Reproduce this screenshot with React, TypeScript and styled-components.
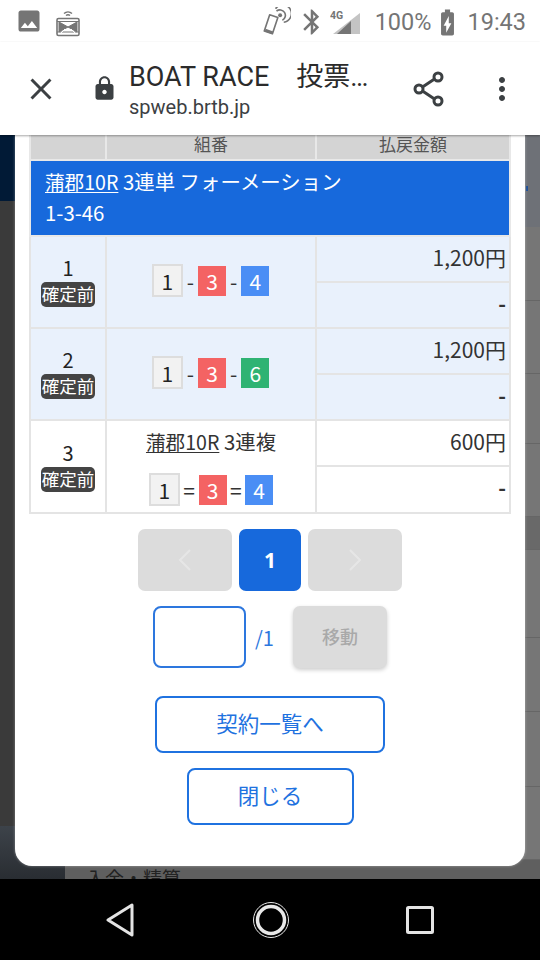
import React from 'react';
import styled, { createGlobalStyle } from 'styled-components';
import { MdImage, MdBluetooth, MdBatteryChargingFull, MdClose, MdLock, MdMoreVert } from 'react-icons/md';

const jp = `"Noto Sans CJK JP", "Noto Sans", sans-serif`;

const GlobalStyle = createGlobalStyle`
    html, body {
        margin: 0;
        padding: 0;
        background: #000;
    }
    * {
        box-sizing: border-box;
    }
`;

const Screen = styled.div`
    width: 540px;
    height: 960px;
    display: flex;
    flex-direction: column;
    overflow: hidden;
    font-family: ${jp};
    color: #222;
`;

const StatusBar = styled.div`
    height: 42px;
    flex: none;
    background: #fff;
    color: #757575;
    display: flex;
    align-items: center;
    padding: 2px 14px 0 18px;
    font-family: Roboto, sans-serif;
    font-size: 23.5px;
`;

const StatusLeft = styled.div`
    display: flex;
    align-items: center;
    gap: 15px;
    flex: 1;
`;

const StatusRight = styled.div`
    display: flex;
    align-items: center;
`;

const Percent = styled.span`
    margin: 0 1px 0 15px;
`;

const Clock = styled.span`
    margin-left: 4px;
`;

const Toolbar = styled.div`
    height: 93px;
    flex: none;
    background: #fff;
    display: flex;
    align-items: center;
    color: #3c4043;
    position: relative;
    z-index: 2;
    box-shadow: 0 1px 2px rgba(0, 0, 0, 0.35);
`;

const CloseButton = styled.div`
    width: 81px;
    display: flex;
    justify-content: center;
    padding-top: 1px;
`;

const LockSlot = styled.div`
    width: 48px;
    display: flex;
    padding: 0 0 0 10px;
`;

const TitleBlock = styled.div`
    flex: 1;
    padding-top: 3px;
`;

const PageTitle = styled.div`
    font-family: Roboto, "Noto Sans CJK JP", sans-serif;
    font-size: 27px;
    line-height: 34px;
    color: #2b2b2b;
`;

const PageUrl = styled.div`
    font-family: Roboto, sans-serif;
    font-size: 20px;
    line-height: 26px;
    color: #3c4043;
`;

const ToolIcons = styled.div`
    display: flex;
    align-items: center;
    gap: 39px;
    padding-right: 20px;
`;

const Viewport = styled.div`
    flex: 1;
    position: relative;
    overflow: hidden;
    background: #757575;
`;

const Backdrop = styled.div`
    height: 100%;
    display: flex;
`;

const Sidebar = styled.div`
    width: 65px;
    flex: none;
    display: flex;
    flex-direction: column;
`;

const SidebarTop = styled.div`
    height: 66px;
    background: #011a36;
`;

const SidebarMiddle = styled.div`
    height: 625px;
    background: #3a3a3a;
`;

const SidebarBottom = styled.div`
    flex: 1;
    background: linear-gradient(#3d434a, #292d32);
`;

const Rows = styled.div`
    flex: 1;
    display: flex;
    flex-direction: column;
`;

const RowHeader = styled.div`
    height: 92px;
    flex: none;
    background: #6e7177;
    position: relative;

    &::after {
        content: '';
        position: absolute;
        left: 461px;
        top: 51px;
        width: 2px;
        height: 5px;
        background: #1f4f96;
    }
`;

const BackRow = styled.div<{ $height: number; $dark?: boolean }>`
    height: ${p => p.$height}px;
    flex: none;
    background: ${p => (p.$dark ? '#696969' : '#767676')};
    border-bottom: 1px solid #666;
`;

const BackLabel = styled.div`
    flex: 1;
    padding: 6px 0 0 21px;
    font-size: 19px;
    line-height: 24px;
    color: #222;
    background: #5f5f5f;
`;

const Modal = styled.div`
    position: absolute;
    top: 0;
    left: 15px;
    width: 510px;
    height: 731px;
    background: #fff;
    border-radius: 0 0 17px 17px;
    overflow: hidden;
    box-shadow: 0 0 3px rgba(255, 255, 255, 0.4);
    display: flex;
    flex-direction: column;
    align-items: center;
`;

const Table = styled.table`
    width: 482px;
    margin: -16px 0 0 0;
    flex: none;
    table-layout: fixed;
    border-collapse: collapse;
    font-size: 21px;
    line-height: 28px;
`;

const HeadCell = styled.th`
    height: 41px;
    padding: 11px 0 1px;
    background: #d4d4d4;
    border: 2px solid #e8e8e8;
    border-top: none;
    font-size: 17px;
    font-weight: 400;
    line-height: 24px;
    color: #555;
`;

const NoLabel = styled.span`
    display: block;
    margin-top: -28px;
    color: #555;
`;

const BlueCell = styled.td`
    height: 75px;
    background: #1769dc;
    color: #fff;
    padding: 5px 14px 8px;
    border: 2px solid #e8e8e8;
    line-height: 30px;
    font-size: 20.4px;
`;

const Race = styled.u`
    font-size: 19.6px;
    text-underline-offset: 2px;
`;

const Cell = styled.td<{ $tinted?: boolean }>`
    background: ${p => (p.$tinted ? '#e9f1fc' : '#fff')};
    border: 2px solid #e4e4e4;
    text-align: center;
    padding: 0;
`;

const AmountCell = styled(Cell)<{ $height: number }>`
    height: ${p => p.$height}px;
    text-align: right;
    padding: 0 3px 5px 0;
    color: #333;
`;

const Dash = styled.span`
    font-weight: 700;
`;

const RowNo = styled.div`
    font-size: 20px;
    line-height: 28px;
`;

const Badge = styled.span`
    display: inline-block;
    background: #444;
    color: #fff;
    font-size: 17.5px;
    line-height: 23px;
    height: 25px;
    padding: 0 1px;
    border-radius: 5px;
    vertical-align: top;
`;

const Combo = styled.div<{ $wide?: boolean }>`
    display: flex;
    justify-content: center;
    align-items: center;
    gap: ${p => (p.$wide ? 3.5 : 4)}px;
    color: #333;
    padding-bottom: ${p => (p.$wide ? 0 : 3)}px;
    padding-right: ${p => (p.$wide ? 0 : 1)}px;
`;

const chipColors: Record<number, string> = {
    1: '#f2f2f2',
    3: '#f46363',
    4: '#4a8ef5',
    6: '#2fb373',
};

const Chip = styled.span<{ $n: number }>`
    width: ${p => (p.$n === 1 ? 31 : 28)}px;
    height: ${p => (p.$n === 1 ? 33 : 30)}px;
    display: flex;
    align-items: center;
    justify-content: center;
    font-size: 21px;
    background: ${p => chipColors[p.$n]};
    color: ${p => (p.$n === 1 ? '#222' : '#fff')};
    border: ${p => (p.$n === 1 ? '2px solid #ddd' : 'none')};
`;

const ComboTitle = styled.div`
    font-size: 20.4px;
    line-height: 28px;
    margin-bottom: 17px;
    color: #333;
`;

const Pager = styled.div`
    display: flex;
    gap: 7px;
    margin-top: 15px;
`;

const PageButton = styled.div<{ $active?: boolean; $width: number }>`
    width: ${p => p.$width}px;
    height: 62px;
    border-radius: 7px;
    display: flex;
    align-items: center;
    justify-content: center;
    font-size: 21px;
    font-weight: 700;
    font-family: "Noto Sans", sans-serif;
    background: ${p => (p.$active ? '#1769dc' : '#dcdcdc')};
    color: #fff;
`;

const JumpRow = styled.div`
    display: flex;
    align-items: center;
    margin-top: 15px;
`;

const PageInput = styled.input`
    width: 93px;
    height: 62px;
    border: 2px solid #2d77de;
    border-radius: 8px;
    background: #fff;
    outline: none;
`;

const PageTotal = styled.span`
    width: 47px;
    padding-left: 9px;
    font-size: 20px;
    color: #2d77de;
`;

const MoveButton = styled.div`
    width: 94px;
    height: 62px;
    padding-bottom: 2px;
    border-radius: 7px;
    background: #dcdcdc;
    color: #a9a9a9;
    font-size: 18px;
    font-weight: 500;
    display: flex;
    align-items: center;
    justify-content: center;
    box-shadow: 0 2px 4px rgba(0, 0, 0, 0.2);
`;

const OutlineButton = styled.div<{ $width: number; $top: number }>`
    width: ${p => p.$width}px;
    height: 57px;
    margin-top: ${p => p.$top}px;
    padding-bottom: 5px;
    border: 2px solid #1f72e0;
    border-radius: 8px;
    display: flex;
    align-items: center;
    justify-content: center;
    color: #1f72e0;
    font-size: 21.5px;
    background: #fff;
`;

const NavBar = styled.div`
    height: 81px;
    flex: none;
    background: #000;
    display: flex;
    align-items: center;
    justify-content: space-between;
    padding: 0 106px 0 105px;
`;

function PhotoCastIcon() {
    return (
        <svg width="24" height="30" viewBox="0 0 24 30" fill="none" stroke="#757575">
            <path d="M8 6.5a6 6 0 0 1 8 0M10 8.5a3.2 3.2 0 0 1 4 0" strokeWidth="1.4" />
            <rect x="1" y="11.5" width="22" height="17" rx="1.5" strokeWidth="1.6" />
            <path d="M1 14.5h22M1 25h22M3 15l9 5-9 5zM21 15l-9 5 9 5z" fill="#757575" strokeWidth="1" />
            <path d="M4 27l5-5M20 27l-5-5" strokeWidth="1" stroke="#fff" />
        </svg>
    );
}

function NfcPhoneIcon() {
    return (
        <svg width="29" height="30" viewBox="0 0 32 33" fill="none" stroke="#757575" strokeWidth="1.8">
            <path d="M8.5 8.5l9 3-6 18-9-3z" strokeLinejoin="round" />
            <path d="M3.5 25.5l8.5 3" strokeWidth="3" />
            <circle cx="20" cy="9" r="2.2" fill="#757575" stroke="none" />
            <path d="M16 4.5a6 6 0 1 1 6.5 10M15 1.8a9.6 9.6 0 1 1 9 15" />
        </svg>
    );
}

function SignalIcon() {
    return (
        <svg width="30" height="24" viewBox="0 0 30 24">
            <polygon points="30,3 30,24 3,24" fill="#c4c4c4" />
            <polygon points="21,11 21,24 7,24" fill="#757575" />
            <text x="0" y="9" fontSize="10.5" fontWeight="700" fontFamily="Roboto, sans-serif" fill="#757575">4G</text>
        </svg>
    );
}

function ShareIcon() {
    return (
        <svg width="32" height="36" viewBox="0 0 32 36" fill="none" stroke="#3c4043" strokeWidth="3">
            <circle cx="25" cy="6" r="4" />
            <circle cx="6" cy="18" r="4" />
            <circle cx="25" cy="30" r="4" />
            <path d="M9.5 16l12-8M9.5 20l12 8" />
        </svg>
    );
}

function PagerArrow({ left }: { left?: boolean }) {
    return (
        <svg width="14" height="22" viewBox="0 0 14 22" fill="none" stroke="#e6e6e6" strokeWidth="2">
            <path d={left ? 'M12 1L2 11l10 10' : 'M2 1l10 10L2 21'} />
        </svg>
    );
}

function BackIcon() {
    return (
        <svg width="30" height="34" viewBox="0 0 30 34" fill="none" stroke="#e4e4e4" strokeWidth="3" strokeLinejoin="round">
            <path d="M27 2v30L3 17z" />
        </svg>
    );
}

function HomeIcon() {
    return (
        <svg width="38" height="38" viewBox="0 0 38 38" fill="none" stroke="#e8e8e8">
            <circle cx="19" cy="19" r="17.5" strokeWidth="1" />
            <circle cx="19" cy="19" r="13.5" strokeWidth="3.5" />
        </svg>
    );
}

function RecentsIcon() {
    return (
        <svg width="28" height="28" viewBox="0 0 28 28" fill="none" stroke="#e4e4e4" strokeWidth="3" strokeLinejoin="round">
            <rect x="1.5" y="1.5" width="25" height="25" rx="1" />
        </svg>
    );
}

function ComboChips({ numbers, sep, wide }: { numbers: number[], sep: string, wide?: boolean }) {
    return (
        <Combo $wide={wide}>
            {numbers.map((n, i) => (
                <React.Fragment key={i}>
                    {i > 0 && <span>{sep}</span>}
                    <Chip $n={n}>{n}</Chip>
                </React.Fragment>
            ))}
        </Combo>
    );
}

function BetRow({ no, amount, tinted, last, children }: { no: number, amount: string, tinted?: boolean, last?: boolean, children: React.ReactNode }) {
    return (
        <>
            <tr>
                <Cell $tinted={tinted} rowSpan={2}>
                    <RowNo>{no}</RowNo>
                    <Badge>確定前</Badge>
                </Cell>
                <Cell $tinted={tinted} rowSpan={2}>{children}</Cell>
                <AmountCell $tinted={tinted} $height={46}>{amount}</AmountCell>
            </tr>
            <tr>
                <AmountCell $tinted={tinted} $height={last ? 47 : 46}><Dash>-</Dash></AmountCell>
            </tr>
        </>
    );
}

export default function App() {
    return (
        <Screen>
            <GlobalStyle />
            <StatusBar>
                <StatusLeft>
                    <MdImage size={28} style={{ margin: '-2px -2px 0 -3px' }} />
                    <PhotoCastIcon />
                </StatusLeft>
                <StatusRight>
                    <NfcPhoneIcon />
                    <MdBluetooth size={30} style={{ margin: '0 3px 0 6px' }} />
                    <SignalIcon />
                    <Percent>100%</Percent>
                    <MdBatteryChargingFull size={31} />
                    <Clock>19:43</Clock>
                </StatusRight>
            </StatusBar>
            <Toolbar>
                <CloseButton><MdClose size={36} /></CloseButton>
                <LockSlot><MdLock size={27} /></LockSlot>
                <TitleBlock>
                    <PageTitle>BOAT RACE　投票…</PageTitle>
                    <PageUrl>spweb.brtb.jp</PageUrl>
                </TitleBlock>
                <ToolIcons>
                    <ShareIcon />
                    <MdMoreVert size={36} />
                </ToolIcons>
            </Toolbar>
            <Viewport>
                <Backdrop>
                    <Sidebar>
                        <SidebarTop />
                        <SidebarMiddle />
                        <SidebarBottom />
                    </Sidebar>
                    <Rows>
                        <RowHeader />
                        <BackRow $height={74} />
                        <BackRow $height={73} />
                        <BackRow $height={70} />
                        <BackRow $height={73} />
                        <BackRow $height={33} $dark />
                        <BackRow $height={88} />
                        <BackRow $height={74} />
                        <BackRow $height={75} />
                        <BackRow $height={73} />
                        <BackLabel>入金・精算</BackLabel>
                    </Rows>
                </Backdrop>
                <Modal>
                    <Table>
                        <colgroup>
                            <col style={{ width: 76 }} />
                            <col style={{ width: 210 }} />
                            <col />
                        </colgroup>
                        <thead>
                            <tr>
                                <HeadCell><NoLabel>No</NoLabel></HeadCell>
                                <HeadCell>組番</HeadCell>
                                <HeadCell>払戻金額</HeadCell>
                            </tr>
                        </thead>
                        <tbody>
                            <tr>
                                <BlueCell colSpan={3}>
                                    <Race>蒲郡10R</Race> 3連単 フォーメーション<br />1-3-46
                                </BlueCell>
                            </tr>
                            <BetRow no={1} amount="1,200円" tinted>
                                <ComboChips numbers={[1, 3, 4]} sep="-" />
                            </BetRow>
                            <BetRow no={2} amount="1,200円" tinted>
                                <ComboChips numbers={[1, 3, 6]} sep="-" />
                            </BetRow>
                            <BetRow no={3} amount="600円" last>
                                <ComboTitle><Race>蒲郡10R</Race> 3連複</ComboTitle>
                                <ComboChips numbers={[1, 3, 4]} sep="=" wide />
                            </BetRow>
                        </tbody>
                    </Table>
                    <Pager>
                        <PageButton $width={94}><PagerArrow left /></PageButton>
                        <PageButton $width={62} $active>1</PageButton>
                        <PageButton $width={94}><PagerArrow /></PageButton>
                    </Pager>
                    <JumpRow>
                        <PageInput />
                        <PageTotal>/1</PageTotal>
                        <MoveButton>移動</MoveButton>
                    </JumpRow>
                    <OutlineButton $width={230} $top={28}>契約一覧へ</OutlineButton>
                    <OutlineButton $width={167} $top={15}>閉じる</OutlineButton>
                </Modal>
            </Viewport>
            <NavBar>
                <BackIcon />
                <HomeIcon />
                <RecentsIcon />
            </NavBar>
        </Screen>
    );
}
